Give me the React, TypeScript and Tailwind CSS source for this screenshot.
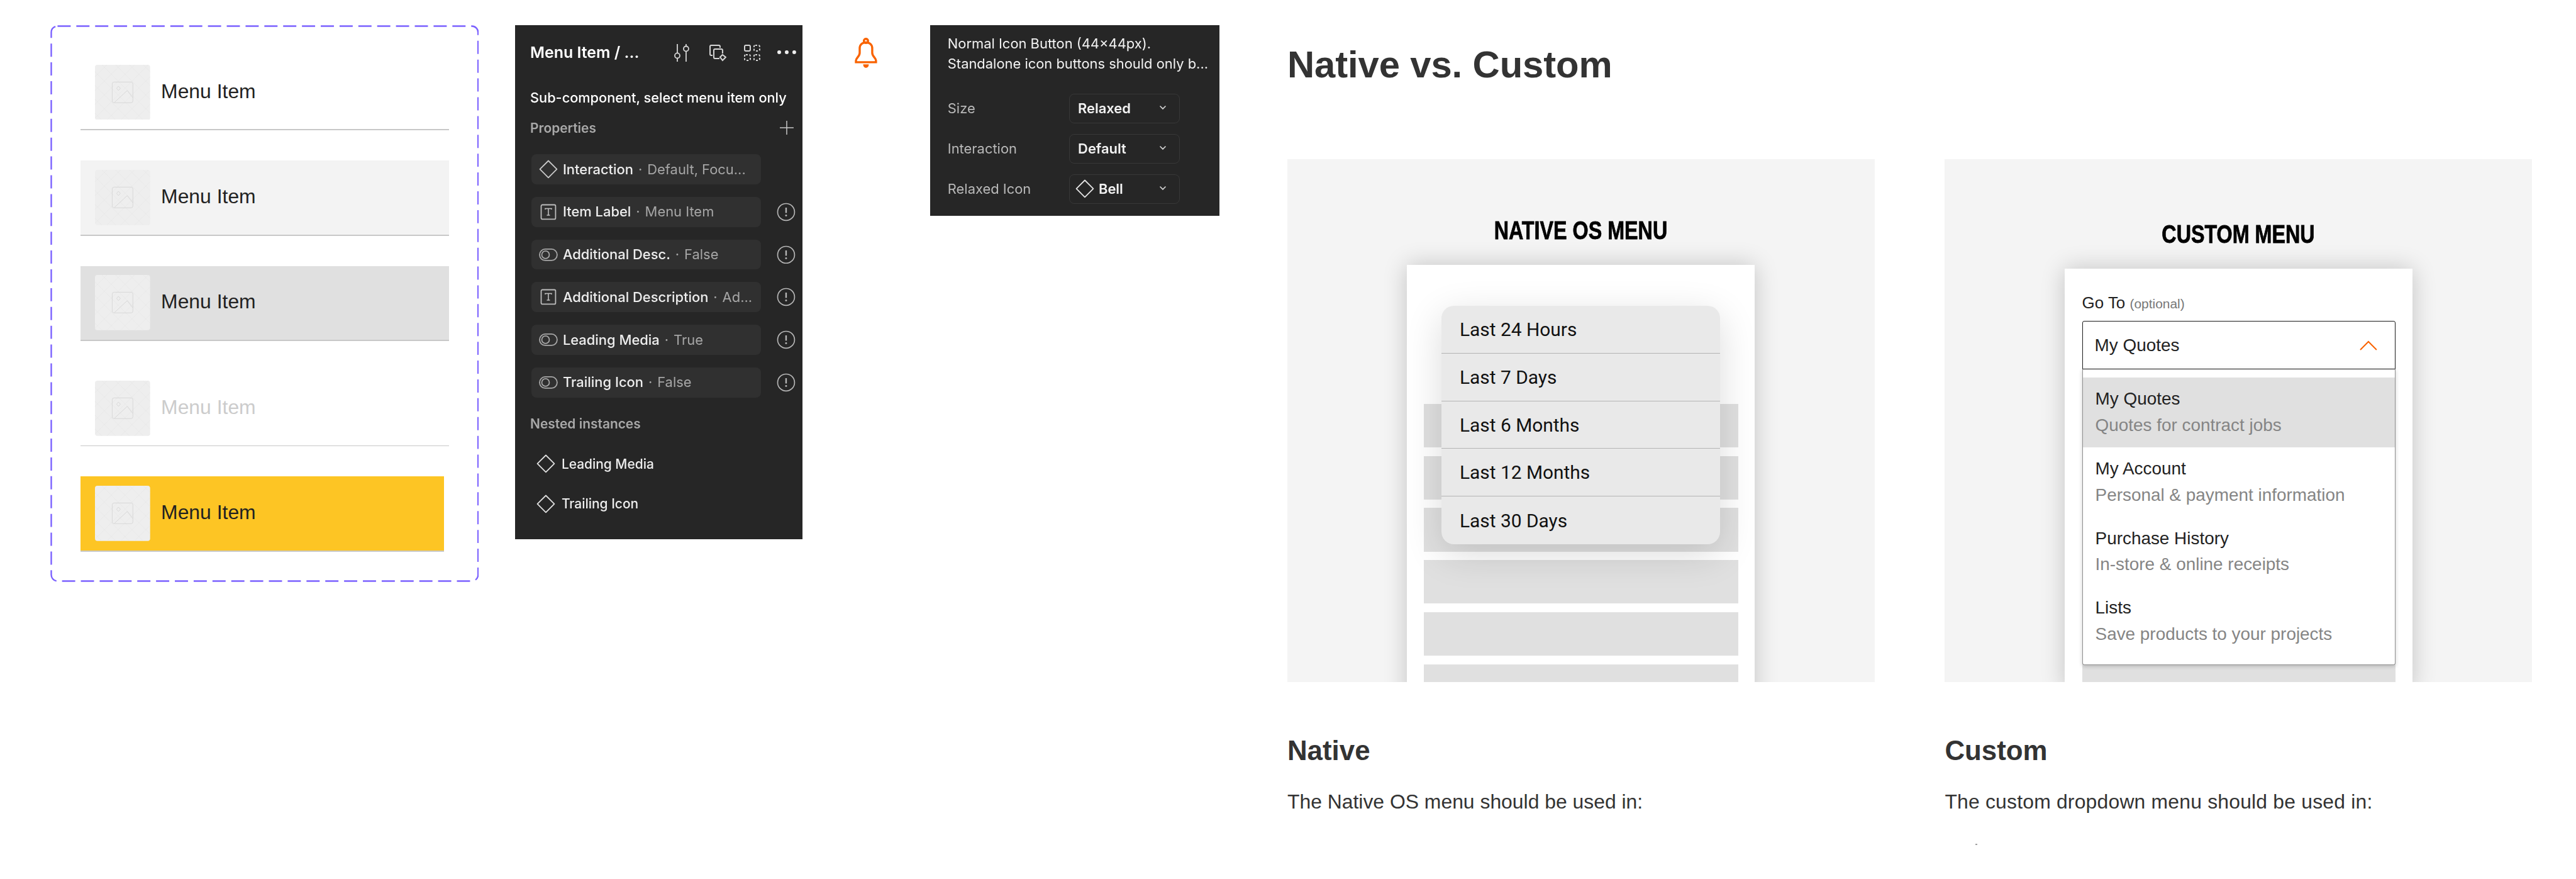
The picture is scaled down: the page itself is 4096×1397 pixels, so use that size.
import React from "react";

const sans = "[font-family:'Liberation_Sans',Arial,sans-serif]";

function Thumb({ id }: { id: string }) {
  return (
    <svg width="88" height="88" viewBox="0 0 88 88" className="shrink-0">
      <defs>
        <pattern id={id} width="22" height="22" patternUnits="userSpaceOnUse" x="4" y="4">
          <path d="M0 11 L11 0 L22 11 L11 22 Z" fill="none" stroke="#e6e6e6" strokeWidth="0.7" />
        </pattern>
      </defs>
      <rect width="88" height="88" rx="4" fill="#eeeeee" />
      <rect width="88" height="88" rx="4" fill={`url(#${id})`} />
      <rect x="27.5" y="27.5" width="33" height="33" rx="3" fill="none" stroke="#d2d2d2" strokeWidth="0.8" />
      <path d="M37.5 34 L40.5 37.5 L37.5 41 L34.500 37.5 Z" fill="none" stroke="#d2d2d2" strokeWidth="0.8" />
      <path d="M31 60 L51.500 41 L60 52" fill="none" stroke="#d2d2d2" strokeWidth="0.8" />
    </svg>
  );
}

function MenuRow({ id, bg, text = "text-[#222222]", w = "w-[588px]" }: { id: string; bg: string; text?: string; w?: string }) {
  return (
    <div className="w-[588px] flex flex-col">
      <div className={`${w} h-[118px] ${bg} flex items-center pl-[24px]`}>
        <Thumb id={id} />
        <span className={`ml-[17px] text-[32px] leading-[38px] -mt-[2px] ${text}`}>Menu Item</span>
      </div>
      <div className={`${w} h-[2px] bg-[#c8c8c8]`} />
    </div>
  );
}

function Diamond({ size = 30, color = "#c9c9c9" }: { size?: number; color?: string }) {
  return (
    <svg width={size} height={size} viewBox="0 0 30 30" className="shrink-0">
      <path d="M15 1.500 L28.500 15 L15 28.500 L1.500 15 Z" fill="none" stroke={color} strokeWidth="1.8" strokeLinejoin="round" />
    </svg>
  );
}
function TextIcon() {
  return (
    <svg width="30" height="30" viewBox="0 0 30 30" className="shrink-0">
      <rect x="3.500" y="3.500" width="23" height="23" rx="2" fill="none" stroke="#bdbdbd" strokeWidth="1.800" />
      <path d="M10 11 V9.500 H20 V11 M15 9.500 V20 M12.500 20 H17.500" fill="none" stroke="#bdbdbd" strokeWidth="1.600" />
    </svg>
  );
}
function ToggleIcon() {
  return (
    <svg width="30" height="30" viewBox="0 0 30 30" className="shrink-0">
      <rect x="1" y="6" width="28" height="18" rx="9" fill="none" stroke="#a8a8a8" strokeWidth="1.800" />
      <circle cx="10.500" cy="15" r="6" fill="none" stroke="#a8a8a8" strokeWidth="1.800" />
    </svg>
  );
}
function Alert() {
  return (
    <svg width="30" height="30" viewBox="0 0 30 30" className="shrink-0">
      <circle cx="15" cy="15" r="13.500" fill="none" stroke="#b5b5b5" strokeWidth="1.700" />
      <path d="M15 8 V16.500" stroke="#b5b5b5" strokeWidth="2.400" />
      <circle cx="15" cy="20.500" r="1.500" fill="#b5b5b5" />
    </svg>
  );
}

function PropRow({ icon, label, value, alert = true }: { icon: React.ReactNode; label: string; value: string; alert?: boolean }) {
  return (
    <div className="flex items-center">
      <div className="w-[366px] h-[48px] rounded-[8px] bg-[#303030] flex items-center pl-[12px] text-[22px] whitespace-nowrap overflow-hidden">
        {icon}
        <span className="ml-[8px] text-[#ededed] font-medium">{label}</span>
        <span className="ml-[8px] text-[#a6a6a6]">·</span>
        <span className="ml-[8px] text-[#a6a6a6]">{value}</span>
      </div>
      <div className="ml-[25px]">{alert ? <Alert /> : <div className="w-[30px]" />}</div>
    </div>
  );
}

function Select({ label, value, icon }: { label: string; value: string; icon?: boolean }) {
  return (
    <div className="flex items-center">
      <span className="w-[194px] text-[22px] text-[#b8b8b8]">{label}</span>
      <div className="w-[176px] h-[47px] rounded-[8px] border-2 border-[#383838] flex items-center pl-[13px] relative">
        {icon && <div className="-ml-[4px] mr-[7px]"><Diamond size={30} color="#e6e6e6" /></div>}
        <span className="text-[22px] font-semibold text-[#f2f2f2]">{value}</span>
        <svg width="12" height="10" viewBox="0 0 12 10" className="absolute right-[20px] top-[16px]">
          <path d="M1.500 2.500 L6 7 L10.500 2.500" fill="none" stroke="#cfcfcf" strokeWidth="1.700" />
        </svg>
      </div>
    </div>
  );
}

function Panel1() {
  return (
    <div className="ml-[58px] w-[458px] h-[820px] bg-[#262626] pl-[24px] pt-[20px] font-['Inter',sans-serif] shrink-0 blur-[0.4px]">
      <div className="h-[48px] flex items-center">
        <span className="w-[228px] text-[25px] font-semibold text-white whitespace-nowrap">Menu Item / ...</span>
        <svg width="28" height="30" viewBox="0 0 28 30" className="shrink-0">
          <g fill="none" stroke="#d6d6d6" strokeWidth="1.800">
            <path d="M7 1 V15 M7 24 V29 M21 1 V4 M21 13 V29" />
            <circle cx="7" cy="19.500" r="4" />
            <circle cx="21" cy="8.500" r="4" />
          </g>
        </svg>
        <svg width="28" height="28" viewBox="0 0 28 28" className="ml-[29px] shrink-0">
          <g fill="none" stroke="#d6d6d6" strokeWidth="2">
            <path d="M6 18 H4 a2 2 0 0 1 -2 -2 V4 a2 2 0 0 1 2 -2 H16 a2 2 0 0 1 2 2 V6" />
            <path d="M17 23 H10 a2 2 0 0 1 -2 -2 V10 a2 2 0 0 1 2 -2 H20 a2 2 0 0 1 2 2 V15" />
            <path d="M22 17 L27 21 L22 26 L18 21 Z" />
          </g>
        </svg>
        <svg width="28" height="28" viewBox="0 0 28 28" className="ml-[27px] shrink-0">
          <g fill="none" stroke="#d6d6d6" strokeWidth="2">
            <rect x="2" y="2" width="9" height="9" rx="2" />
            <rect x="17" y="2" width="9" height="9" rx="2" strokeDasharray="3 2.500" />
            <rect x="2" y="17" width="9" height="9" rx="2" strokeDasharray="3 2.500" />
            <rect x="17" y="17" width="9" height="9" rx="2" strokeDasharray="3 2.500" />
          </g>
        </svg>
        <svg width="32" height="8" viewBox="0 0 32 8" className="ml-[25px] shrink-0 -mt-[2px]">
          <circle cx="4" cy="4" r="3" fill="#eeeeee" />
          <circle cx="16" cy="4" r="3" fill="#eeeeee" />
          <circle cx="28" cy="4" r="3" fill="#eeeeee" />
        </svg>
      </div>
      <div className="mt-[34px] h-[30px] leading-[30px] text-[21.800px] font-medium text-white whitespace-nowrap">Sub-component, select menu item only</div>
      <div className="mt-[18px] h-[28px] flex items-center">
        <span className="text-[21px] font-semibold text-[#a8a8a8]">Properties</span>
        <svg width="24" height="24" viewBox="0 0 24 24" className="ml-auto mr-[13px]">
          <path d="M12 1 V23 M1 12 H23" stroke="#c8c8c8" strokeWidth="1.500" />
        </svg>
      </div>
      <div className="mt-[28px] ml-[2px] flex flex-col gap-[20px]">
        <PropRow icon={<Diamond />} label="Interaction" value="Default, Focu..." alert={false} />
        <PropRow icon={<TextIcon />} label="Item Label" value="Menu Item" />
        <PropRow icon={<ToggleIcon />} label="Additional Desc." value="False" />
        <PropRow icon={<TextIcon />} label="Additional Description" value="Ad..." />
        <PropRow icon={<ToggleIcon />} label="Leading Media" value="True" />
        <PropRow icon={<ToggleIcon />} label="Trailing Icon" value="False" />
      </div>
      <div className="mt-[28px] h-[28px] leading-[28px] text-[21px] font-semibold text-[#a8a8a8]">Nested instances</div>
      <div className="mt-[26px] flex flex-col gap-[16px] pl-[10px]">
        <div className="h-[48px] flex items-center text-[21px] font-medium text-[#ededed]"><Diamond color="#e0e0e0" /><span className="ml-[10px]">Leading Media</span></div>
        <div className="h-[48px] flex items-center text-[21px] font-medium text-[#ededed]"><Diamond color="#e0e0e0" /><span className="ml-[10px]">Trailing Icon</span></div>
      </div>
    </div>
  );
}

function Panel2() {
  return (
    <div className="ml-[84px] w-[462px] h-[304px] bg-[#262626] pl-[28px] pt-[14px] font-['Inter',sans-serif] shrink-0 blur-[0.4px]">
      <div className="text-[22px] leading-[32px] text-[#f2f2f2] whitespace-nowrap">Normal Icon Button (44×44px).</div>
      <div className="text-[22px] leading-[32px] text-[#f2f2f2] whitespace-nowrap">Standalone icon buttons should only b...</div>
      <div className="mt-[32px] flex flex-col gap-[17px]">
        <Select label="Size" value="Relaxed" />
        <Select label="Interaction" value="Default" />
        <Select label="Relaxed Icon" value="Bell" icon />
      </div>
    </div>
  );
}

const title = "h-[46px] leading-[46px] text-[41px] font-bold text-black scale-x-[0.79] whitespace-nowrap [-webkit-text-stroke:0.8px_black]";

function NativeMenu() {
  const items = ["Last 24 Hours", "Last 7 Days", "Last 6 Months", "Last 12 Months", "Last 30 Days"];
  return (
    <div className="absolute top-[66px] left-[55px] w-[444px] rounded-[20px] bg-[#e9e9e9] shadow-[0_16px_60px_rgba(0,0,0,0.14)] font-['Roboto',sans-serif]">
      {items.map((t, i) => (
        <div key={t} className={`h-[76px] flex items-center pl-[29px] pt-[2px] text-[30px] text-[#111111] ${i < 4 ? "border-b border-[#b4b4b4]" : ""}`}>{t}</div>
      ))}
    </div>
  );
}

function NativePanel() {
  return (
    <div className="w-[937px] h-[834px] bg-[#f4f4f4] overflow-hidden flex flex-col items-center pt-[89px]">
      <div className={`${title} pt-[2px]`}>NATIVE OS MENU</div>
      <div className="mt-[33px] relative w-[555px] flex-1 bg-white shadow-[0_0_36px_rgba(0,0,0,0.2)] flex flex-col gap-[13.600px] px-[27px] pt-[222px]">
        {[0, 1, 2, 3, 4, 5].map((i) => (
          <div key={i} className="h-[69.500px] bg-[#e0e0e0] shrink-0" />
        ))}
        <NativeMenu />
      </div>
    </div>
  );
}

function Opt({ t, d, active }: { t: string; d: string; active?: boolean }) {
  return (
    <div className={`h-[111px] pl-[20px] pt-[16px] ${active ? "bg-[#e0e0e0]" : ""}`}>
      <div className="h-[36px] leading-[36px] text-[28px] text-[#222222]">{t}</div>
      <div className="mt-[6px] h-[36px] leading-[36px] text-[28px] text-[#858585]">{d}</div>
    </div>
  );
}

function CustomPanel() {
  return (
    <div className="w-[937px] h-[834px] bg-[#f4f4f4] overflow-hidden flex flex-col items-center pt-[97px]">
      <div className={title}>CUSTOM MENU</div>
      <div className="mt-[32px] w-[555px] flex-1 bg-white shadow-[0_0_36px_rgba(0,0,0,0.2)] pl-[28px] pt-[39px] flex flex-col overflow-visible">
        <div className="h-[32px] leading-[32px] text-[26px] text-[#222222]">
          Go To <span className="text-[21px] text-[#777777]">(optional)</span>
        </div>
        <div className="mt-[12px] w-[500px] h-[77.500px] border-2 border-[#1a1a1a] rounded-t-[3px] flex items-center justify-between pl-[19px] pr-[28px] bg-white">
          <span className="text-[28px] text-[#222222]">My Quotes</span>
          <svg width="28" height="16" viewBox="0 0 28 16">
            <path d="M1 15 L14 2 L27 15" fill="none" stroke="#f96302" strokeWidth="2" />
          </svg>
        </div>
        <div className="relative z-10 w-[500px] h-[471px] bg-white border-x border-b-2 border-[#8e8e8e] rounded-b-[3px] pt-[13px] shadow-[0_2px_6px_rgba(0,0,0,0.2)]">
          <Opt t="My Quotes" d="Quotes for contract jobs" active />
          <Opt t="My Account" d="Personal & payment information" />
          <Opt t="Purchase History" d="In-store & online receipts" />
          <Opt t="Lists" d="Save products to your projects" />
        </div>
        <div className="w-[500px] h-[40px] bg-[#e0e0e0] shrink-0" />
      </div>
    </div>
  );
}

export default function App() {
  return (
    <div className={`[zoom:0.9966] w-[4110px] h-[1402px] overflow-hidden bg-white flex items-start pl-[80px] pt-[40px] ${sans}`}>
      <div className="relative w-[684px] h-[888px] pt-[48px] pl-[48px] flex flex-col gap-[48px] shrink-0">
        <svg className="absolute inset-0" width="684" height="888" viewBox="0 0 684 888">
          <rect x="1.500" y="1.500" width="681" height="885" rx="10" fill="none" stroke="#7b61ff" strokeWidth="2.400" strokeDasharray="21 9" />
        </svg>
        <MenuRow id="p1" bg="" />
        <MenuRow id="p2" bg="bg-[#f3f3f3]" />
        <MenuRow id="p3" bg="bg-[#e0e0e0]" />
        <MenuRow id="p4" bg="" text="text-[#cccccc]" />
        <MenuRow id="p5" bg="bg-[#fdc524]" w="w-[580px]" />
      </div>

      <Panel1 />

      <svg width="36" height="48" viewBox="0 0 36 48" className="ml-[84px] mt-[20px] shrink-0">
        <g fill="none" stroke="#f96302" strokeWidth="3.400">
          <circle cx="18" cy="5" r="3.300" />
          <path d="M2 39 V36.500 C2 32 8 30 8 24 V17 C8 11 12 7.500 18 7.500 C24 7.500 28 11 28 17 V24 C28 30 34 32 34 36.500 V39 Z" />
        </g>
        <path d="M13.500 42.500 H22.500 C22.500 46 20.500 48 18 48 C15.500 48 13.500 46 13.500 42.500 Z" fill="#f96302" />
      </svg>

      <Panel2 />

      <div className="ml-[108px] w-[1986px] shrink-0">
        <h1 className="mt-[27px] h-[72px] leading-[72px] text-[60px] font-bold text-[#333333] tracking-[-0.1px]">Native vs. Custom</h1>
        <div className="mt-[115px] flex gap-[112px]">
          <div className="w-[937px]">
            <NativePanel />
            <h2 className="mt-[83px] h-[52px] leading-[52px] text-[44px] font-bold text-[#333333]">Native</h2>
            <p className="mt-[36px] h-[40px] leading-[40px] text-[32px] text-[#333333]">The Native OS menu should be used in:</p>
          </div>
          <div className="w-[937px]">
            <CustomPanel />
            <h2 className="mt-[83px] h-[52px] leading-[52px] text-[44px] font-bold text-[#333333]">Custom</h2>
            <p className="mt-[36px] h-[40px] leading-[40px] text-[32px] text-[#333333] tracking-[0.2px]">The custom dropdown menu should be used in:</p>
            <div className="mt-[47px] ml-[49px] w-[3px] h-[2px] bg-[#a0a0a0]" />
          </div>
        </div>
      </div>
    </div>
  );
}
